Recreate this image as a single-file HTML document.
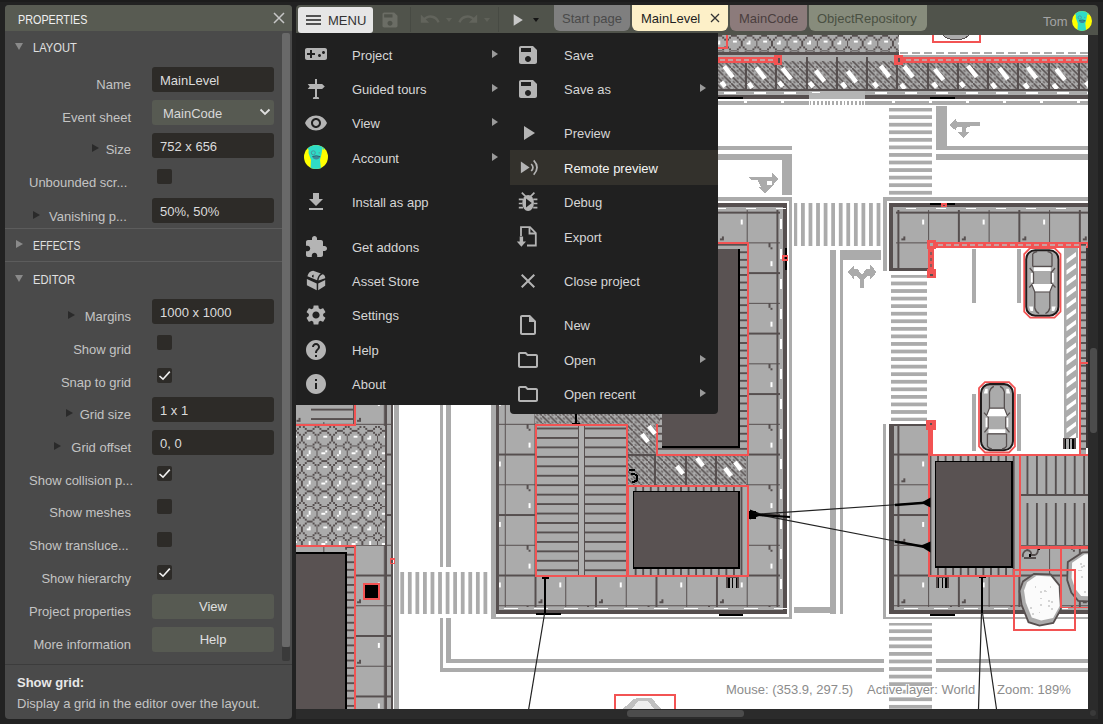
<!DOCTYPE html>
<html>
<head>
<meta charset="utf-8">
<title>Construct 3</title>
<style>
*{box-sizing:border-box;margin:0;padding:0}
html,body{width:1103px;height:724px;overflow:hidden;background:#222;font-family:"Liberation Sans",sans-serif;font-size:13px;color:#d0d0d0}
body{position:relative}
.abs{position:absolute}
#topstrip{left:0;top:0;width:1103px;height:2px;background:#1c1c1c}
/* ---------- properties panel ---------- */
#panel{left:5px;top:5px;width:287px;height:714px;background:#4a4a4a;border-radius:4px 4px 4px 4px;overflow:hidden}
#phead{left:0;top:0;width:287px;height:26px;background:#585b52}
#phead .t{left:13px;top:7px;font-size:13px;color:#f0f0f0;transform:scaleX(.83);transform-origin:0 0}
.sec{left:28px;font-size:13px;color:#e0e0e0;transform:scaleX(.86);transform-origin:0 0}
.lbl{right:161px;font-size:13px;color:#c4c4c4;white-space:nowrap;text-align:right}
.inp{left:147px;width:122px;height:25px;background:#2d2b28;border-radius:3px;color:#dcdcdc;font-size:13px;padding:6px 0 0 8px;white-space:nowrap}
.sel{left:147px;width:122px;height:25px;background:#575a52;border-radius:3px;color:#d8d8d8;font-size:13px;padding:6px 0 0 11px}
.btn{left:147px;width:122px;height:25px;background:#575a52;border-radius:3px;color:#e0e0e0;font-size:13px;text-align:center;padding-top:5px}
.chk{left:152px;width:15px;height:15px;background:#2d2b28;border-radius:2px}
.hr{left:0;width:277px;height:1px;background:#5c5c5c}
.tri-r{width:0;height:0;border-left:7px solid #2a2a2a;border-top:4.5px solid transparent;border-bottom:4.5px solid transparent}
.tri-rl{width:0;height:0;border-left:7px solid #8a8a8a;border-top:4.5px solid transparent;border-bottom:4.5px solid transparent}
.tri-d{width:0;height:0;border-top:7px solid #8a8a8a;border-left:4.5px solid transparent;border-right:4.5px solid transparent}
#pscroll{left:277px;top:28px;width:8px;height:614px;background:#696969;border-radius:2px}
#pscroll2{left:277px;top:642px;width:8px;height:14px;background:#3a3a3a;border-radius:0 0 2px 2px}
/* ---------- toolbar ---------- */
#toolbar{left:296px;top:5px;width:802px;height:29.5px;background:#50534b;border-radius:4px 4px 0 0}
#menubtn{left:2px;top:2px;width:75px;height:26px;background:#e6e6e6;border-radius:3px}
#menubtn .t{left:30px;top:6px;color:#333;font-size:13px}
.tab{top:0;height:26px;border-radius:0 0 6px 6px;font-size:13px;padding-top:6px;white-space:nowrap}
.vsep{top:2px;width:1px;height:25px;background:#474a43}
/* ---------- menus ---------- */
#menu1{left:296px;top:33px;width:214px;height:371.5px;background:#202020}
#menu2{left:510px;top:33px;width:207.5px;height:381px;background:#202020;border-radius:0 0 4px 4px}
.mi{left:54px;font-size:13px;color:#d6d6d6;white-space:nowrap}
.marr{width:0;height:0;border-left:6px solid #9a9a9a;border-top:4px solid transparent;border-bottom:4px solid transparent}
/* ---------- canvas ---------- */
.stat{font-size:13px;color:#8c8c8c;white-space:nowrap;text-shadow:1px 1px 0 #fff,-1px -1px 0 #fff,1px -1px 0 #fff,-1px 1px 0 #fff,0 1px 0 #fff,1px 0 0 #fff}
#canvas{left:296px;top:33px;width:792px;height:676px;background:#fff;overflow:hidden}
#vscroll{left:1088px;top:33px;width:10px;height:686px;background:#2b2b2b}
#hscroll{left:296px;top:709px;width:792px;height:10px;background:#2b2b2b}
</style>
</head>
<body>
<div id="topstrip" class="abs"></div>

<!-- PANEL -->
<div id="panel" class="abs">
  <div id="phead" class="abs"><div class="t abs">PROPERTIES</div>
    <svg class="abs" style="left:268px;top:7px" width="12" height="12" viewBox="0 0 12 12"><path d="M1 1L11 11M11 1L1 11" stroke="#c6c6c6" stroke-width="1.5" fill="none"/></svg>
  </div>
  <div id="pbody"><div class="abs tri-d" style="left:10px;top:38px"></div><div class="abs sec" style="top:35px">LAYOUT</div>
<div class="abs lbl" style="top:72px">Name</div>
<div class="abs inp" style="top:62px">MainLevel</div>
<div class="abs lbl" style="top:105px">Event sheet</div>
<div class="abs sel" style="top:95px">MainCode<svg class="abs" style="left:107px;top:8px" width="12" height="8" viewBox="0 0 12 8"><path d="M1.5 1.5L6 6L10.5 1.5" stroke="#e0e0e0" stroke-width="1.8" fill="none"/></svg></div>
<div class="abs lbl" style="top:137px">Size</div><div class="abs tri-r" style="left:87px;top:139px"></div>
<div class="abs inp" style="top:128px">752 x 656</div>
<div class="abs lbl" style="right:auto;left:24px;top:170px">Unbounded scr...</div>
<div class="abs chk" style="top:164px"></div>
<div class="abs lbl" style="right:auto;left:44px;top:204px">Vanishing p...</div><div class="abs tri-r" style="left:28px;top:206px"></div>
<div class="abs inp" style="top:193px">50%, 50%</div>
<div class="abs hr" style="top:223px"></div>
<div class="abs tri-rl" style="left:11px;top:235px"></div><div class="abs sec" style="transform:scaleX(.8);top:233px">EFFECTS</div>
<div class="abs hr" style="top:256px"></div>
<div class="abs tri-d" style="left:10px;top:270px"></div><div class="abs sec" style="top:267px">EDITOR</div>
<div class="abs lbl" style="top:304px">Margins</div><div class="abs tri-r" style="left:63px;top:306px"></div>
<div class="abs inp" style="top:294px">1000 x 1000</div>
<div class="abs lbl" style="top:337px">Show grid</div>
<div class="abs chk" style="top:330px"></div>
<div class="abs lbl" style="top:370px">Snap to grid</div>
<div class="abs chk" style="top:363px"><svg width="15" height="15" viewBox="0 0 15 15"><path d="M2.5 8L6 11.2L12.8 3.6" stroke="#f0f0f0" stroke-width="1.6" fill="none"/></svg></div>
<div class="abs lbl" style="top:402px">Grid size</div><div class="abs tri-r" style="left:61px;top:404px"></div>
<div class="abs inp" style="top:392px">1 x 1</div>
<div class="abs lbl" style="top:435px">Grid offset</div><div class="abs tri-r" style="left:49px;top:437px"></div>
<div class="abs inp" style="top:425px">0, 0</div>
<div class="abs lbl" style="right:auto;left:24px;top:468px">Show collision p...</div>
<div class="abs chk" style="top:461px"><svg width="15" height="15" viewBox="0 0 15 15"><path d="M2.5 8L6 11.2L12.8 3.6" stroke="#f0f0f0" stroke-width="1.6" fill="none"/></svg></div>
<div class="abs lbl" style="top:500px">Show meshes</div>
<div class="abs chk" style="top:494px"></div>
<div class="abs lbl" style="right:auto;left:24px;top:533px">Show transluce...</div>
<div class="abs chk" style="top:527px"></div>
<div class="abs lbl" style="top:566px">Show hierarchy</div>
<div class="abs chk" style="top:560px"><svg width="15" height="15" viewBox="0 0 15 15"><path d="M2.5 8L6 11.2L12.8 3.6" stroke="#f0f0f0" stroke-width="1.6" fill="none"/></svg></div>
<div class="abs lbl" style="top:599px">Project properties</div>
<div class="abs btn" style="top:589px">View</div>
<div class="abs lbl" style="top:632px">More information</div>
<div class="abs btn" style="top:622px">Help</div>
<div class="abs" style="left:0;top:659px;width:287px;height:1px;background:#3c3c3c"></div>
<div class="abs" style="left:12px;top:670px;font-weight:bold;color:#e8e8e8;font-size:13px">Show grid:</div>
<div class="abs" style="left:12px;top:691px;color:#c4c4c4;font-size:13px;white-space:nowrap">Display a grid in the editor over the layout.</div></div>
  <div id="pscroll" class="abs"></div><div id="pscroll2" class="abs"></div>
</div>

<!-- CANVAS -->
<div id="canvas" class="abs"><svg class="abs" style="left:0;top:0" width="792" height="676" viewBox="0 0 792 676" shape-rendering="crispEdges"><defs>
<pattern id="tile" width="32" height="32" patternUnits="userSpaceOnUse" patternTransform="translate(-3.4,-2.8) scale(1.89)">
 <rect width="32" height="32" fill="#ababab"/>
 <rect x="0" y="0" width="1" height="32" fill="#564f4f"/><rect x="16" y="0" width="1" height="32" fill="#564f4f"/><rect x="0" y="0" width="32" height="1" fill="#564f4f"/><rect x="0" y="16" width="32" height="1" fill="#564f4f"/>
 <rect x="13" y="4" width="1" height="3" fill="#fff"/>
 <rect x="2" y="14" width="2" height="1" fill="#564f4f"/><rect x="3" y="13" width="1" height="1" fill="#564f4f"/>
 <rect x="28" y="17" width="1" height="2" fill="#564f4f"/><rect x="29" y="19" width="1" height="1" fill="#564f4f"/>
 <rect x="29" y="26" width="1" height="3" fill="#fff"/>
</pattern>
<pattern id="cobble" width="16" height="16" patternUnits="userSpaceOnUse" patternTransform="translate(-8.85,1.75) scale(1.89)">
 <rect width="16" height="16" fill="#ababab"/><rect x="3" y="0" width="1" height="1" fill="#564f4f"/><rect x="4" y="0" width="1" height="1" fill="#564f4f"/><rect x="5" y="0" width="1" height="1" fill="#564f4f"/><rect x="0" y="3" width="1" height="1" fill="#564f4f"/><rect x="0" y="4" width="1" height="1" fill="#564f4f"/><rect x="0" y="5" width="1" height="1" fill="#564f4f"/><rect x="2" y="1" width="1" height="1" fill="#564f4f"/><rect x="1" y="2" width="1" height="1" fill="#564f4f"/><rect x="6" y="1" width="1" height="1" fill="#564f4f"/><rect x="7" y="2" width="1" height="1" fill="#564f4f"/><rect x="1" y="6" width="1" height="1" fill="#564f4f"/><rect x="2" y="7" width="1" height="1" fill="#564f4f"/><rect x="7" y="6" width="1" height="1" fill="#564f4f"/><rect x="6" y="7" width="1" height="1" fill="#564f4f"/><rect x="3" y="8" width="1" height="1" fill="#564f4f"/><rect x="4" y="8" width="1" height="1" fill="#564f4f"/><rect x="5" y="8" width="1" height="1" fill="#564f4f"/><rect x="0" y="11" width="1" height="1" fill="#564f4f"/><rect x="0" y="12" width="1" height="1" fill="#564f4f"/><rect x="0" y="13" width="1" height="1" fill="#564f4f"/><rect x="2" y="9" width="1" height="1" fill="#564f4f"/><rect x="1" y="10" width="1" height="1" fill="#564f4f"/><rect x="6" y="9" width="1" height="1" fill="#564f4f"/><rect x="7" y="10" width="1" height="1" fill="#564f4f"/><rect x="1" y="14" width="1" height="1" fill="#564f4f"/><rect x="2" y="15" width="1" height="1" fill="#564f4f"/><rect x="7" y="14" width="1" height="1" fill="#564f4f"/><rect x="6" y="15" width="1" height="1" fill="#564f4f"/><rect x="11" y="0" width="1" height="1" fill="#564f4f"/><rect x="12" y="0" width="1" height="1" fill="#564f4f"/><rect x="13" y="0" width="1" height="1" fill="#564f4f"/><rect x="8" y="3" width="1" height="1" fill="#564f4f"/><rect x="8" y="4" width="1" height="1" fill="#564f4f"/><rect x="8" y="5" width="1" height="1" fill="#564f4f"/><rect x="10" y="1" width="1" height="1" fill="#564f4f"/><rect x="9" y="2" width="1" height="1" fill="#564f4f"/><rect x="14" y="1" width="1" height="1" fill="#564f4f"/><rect x="15" y="2" width="1" height="1" fill="#564f4f"/><rect x="9" y="6" width="1" height="1" fill="#564f4f"/><rect x="10" y="7" width="1" height="1" fill="#564f4f"/><rect x="15" y="6" width="1" height="1" fill="#564f4f"/><rect x="14" y="7" width="1" height="1" fill="#564f4f"/><rect x="11" y="8" width="1" height="1" fill="#564f4f"/><rect x="12" y="8" width="1" height="1" fill="#564f4f"/><rect x="13" y="8" width="1" height="1" fill="#564f4f"/><rect x="8" y="11" width="1" height="1" fill="#564f4f"/><rect x="8" y="12" width="1" height="1" fill="#564f4f"/><rect x="8" y="13" width="1" height="1" fill="#564f4f"/><rect x="10" y="9" width="1" height="1" fill="#564f4f"/><rect x="9" y="10" width="1" height="1" fill="#564f4f"/><rect x="14" y="9" width="1" height="1" fill="#564f4f"/><rect x="15" y="10" width="1" height="1" fill="#564f4f"/><rect x="9" y="14" width="1" height="1" fill="#564f4f"/><rect x="10" y="15" width="1" height="1" fill="#564f4f"/><rect x="15" y="14" width="1" height="1" fill="#564f4f"/><rect x="14" y="15" width="1" height="1" fill="#564f4f"/><rect x="3" y="4" width="2" height="1" fill="#fff"/><rect x="4" y="3" width="1" height="1" fill="#fff"/><rect x="12" y="3" width="2" height="1" fill="#fff"/><rect x="4" y="11" width="1" height="2" fill="#fff"/><rect x="3" y="13" width="1" height="1" fill="#fff"/><rect x="11" y="12" width="2" height="1" fill="#fff"/><rect x="13" y="11" width="1" height="1" fill="#fff"/>
</pattern>
<pattern id="cobble2" width="16" height="16" patternUnits="userSpaceOnUse" patternTransform="translate(4.9,3.76) scale(1.89)">
 <rect width="16" height="16" fill="#ababab"/><rect x="3" y="0" width="1" height="1" fill="#564f4f"/><rect x="4" y="0" width="1" height="1" fill="#564f4f"/><rect x="5" y="0" width="1" height="1" fill="#564f4f"/><rect x="0" y="3" width="1" height="1" fill="#564f4f"/><rect x="0" y="4" width="1" height="1" fill="#564f4f"/><rect x="0" y="5" width="1" height="1" fill="#564f4f"/><rect x="2" y="1" width="1" height="1" fill="#564f4f"/><rect x="1" y="2" width="1" height="1" fill="#564f4f"/><rect x="6" y="1" width="1" height="1" fill="#564f4f"/><rect x="7" y="2" width="1" height="1" fill="#564f4f"/><rect x="1" y="6" width="1" height="1" fill="#564f4f"/><rect x="2" y="7" width="1" height="1" fill="#564f4f"/><rect x="7" y="6" width="1" height="1" fill="#564f4f"/><rect x="6" y="7" width="1" height="1" fill="#564f4f"/><rect x="3" y="8" width="1" height="1" fill="#564f4f"/><rect x="4" y="8" width="1" height="1" fill="#564f4f"/><rect x="5" y="8" width="1" height="1" fill="#564f4f"/><rect x="0" y="11" width="1" height="1" fill="#564f4f"/><rect x="0" y="12" width="1" height="1" fill="#564f4f"/><rect x="0" y="13" width="1" height="1" fill="#564f4f"/><rect x="2" y="9" width="1" height="1" fill="#564f4f"/><rect x="1" y="10" width="1" height="1" fill="#564f4f"/><rect x="6" y="9" width="1" height="1" fill="#564f4f"/><rect x="7" y="10" width="1" height="1" fill="#564f4f"/><rect x="1" y="14" width="1" height="1" fill="#564f4f"/><rect x="2" y="15" width="1" height="1" fill="#564f4f"/><rect x="7" y="14" width="1" height="1" fill="#564f4f"/><rect x="6" y="15" width="1" height="1" fill="#564f4f"/><rect x="11" y="0" width="1" height="1" fill="#564f4f"/><rect x="12" y="0" width="1" height="1" fill="#564f4f"/><rect x="13" y="0" width="1" height="1" fill="#564f4f"/><rect x="8" y="3" width="1" height="1" fill="#564f4f"/><rect x="8" y="4" width="1" height="1" fill="#564f4f"/><rect x="8" y="5" width="1" height="1" fill="#564f4f"/><rect x="10" y="1" width="1" height="1" fill="#564f4f"/><rect x="9" y="2" width="1" height="1" fill="#564f4f"/><rect x="14" y="1" width="1" height="1" fill="#564f4f"/><rect x="15" y="2" width="1" height="1" fill="#564f4f"/><rect x="9" y="6" width="1" height="1" fill="#564f4f"/><rect x="10" y="7" width="1" height="1" fill="#564f4f"/><rect x="15" y="6" width="1" height="1" fill="#564f4f"/><rect x="14" y="7" width="1" height="1" fill="#564f4f"/><rect x="11" y="8" width="1" height="1" fill="#564f4f"/><rect x="12" y="8" width="1" height="1" fill="#564f4f"/><rect x="13" y="8" width="1" height="1" fill="#564f4f"/><rect x="8" y="11" width="1" height="1" fill="#564f4f"/><rect x="8" y="12" width="1" height="1" fill="#564f4f"/><rect x="8" y="13" width="1" height="1" fill="#564f4f"/><rect x="10" y="9" width="1" height="1" fill="#564f4f"/><rect x="9" y="10" width="1" height="1" fill="#564f4f"/><rect x="14" y="9" width="1" height="1" fill="#564f4f"/><rect x="15" y="10" width="1" height="1" fill="#564f4f"/><rect x="9" y="14" width="1" height="1" fill="#564f4f"/><rect x="10" y="15" width="1" height="1" fill="#564f4f"/><rect x="15" y="14" width="1" height="1" fill="#564f4f"/><rect x="14" y="15" width="1" height="1" fill="#564f4f"/><rect x="3" y="4" width="2" height="1" fill="#fff"/><rect x="4" y="3" width="1" height="1" fill="#fff"/><rect x="12" y="3" width="2" height="1" fill="#fff"/><rect x="4" y="11" width="1" height="2" fill="#fff"/><rect x="3" y="13" width="1" height="1" fill="#fff"/><rect x="11" y="12" width="2" height="1" fill="#fff"/><rect x="13" y="11" width="1" height="1" fill="#fff"/>
</pattern>
<pattern id="glass" width="4" height="4" patternUnits="userSpaceOnUse" patternTransform="translate(-3.4,-2.8) scale(1.89)">
 <rect width="4" height="4" fill="#acacac"/>
 <path d="M-1 -1L5 5" stroke="#564f4f" stroke-width=".800" shape-rendering="auto"/>
 <path d="M1 -1L5 3M-1 1L3 5" stroke="#6d6767" stroke-width=".800" stroke-dasharray="1.414 1.414" shape-rendering="auto"/>
</pattern>
<pattern id="hstr" width="4" height="4" patternUnits="userSpaceOnUse" patternTransform="translate(-3.4,-2.8) scale(1.89)">
 <rect width="4" height="4" fill="#fff"/><rect x="0" y="1" width="4" height="2" fill="#ababab"/>
</pattern>
<pattern id="vstr" width="4" height="4" patternUnits="userSpaceOnUse" patternTransform="translate(-3.4,-2.8) scale(1.89)">
 <rect width="4" height="4" fill="#fff"/><rect x="1" y="0" width="2" height="4" fill="#ababab"/>
</pattern>
<pattern id="plankh" width="5" height="5" patternUnits="userSpaceOnUse" patternTransform="translate(239,394.55) scale(1.89)">
 <rect width="5" height="5" fill="#ababab"/><rect x="0" y="0" width="5" height="1" fill="#564f4f"/>
</pattern>
<pattern id="plankv" width="5" height="5" patternUnits="userSpaceOnUse" patternTransform="translate(730.5,0) scale(1.89)">
 <rect width="5" height="5" fill="#ababab"/><rect x="0" y="0" width="1" height="5" fill="#564f4f"/>
</pattern>
<pattern id="diag" width="4" height="4" patternUnits="userSpaceOnUse" patternTransform="translate(-3.4,-2.8) scale(1.89)">
 <rect width="4" height="4" fill="#fff"/>
 <path d="M-1 3L3 -1M1 5L5 1M-1 7 L7 -1" stroke="#ababab" stroke-width="1.250"/>
</pattern>
<pattern id="ticksv" width="4" height="4" patternUnits="userSpaceOnUse" patternTransform="translate(-3.4,-2.8) scale(1.89)">
 <rect width="4" height="4" fill="#ababab"/><rect x="0" y="1" width="4" height="1" fill="#564f4f"/>
</pattern>
<pattern id="ticksh" width="4" height="4" patternUnits="userSpaceOnUse" patternTransform="translate(-3.4,-2.8) scale(1.89)">
 <rect width="4" height="4" fill="#ababab"/><rect x="1" y="0" width="1" height="4" fill="#564f4f"/>
</pattern>
</defs>
<rect x="0" y="0" width="602.5" height="19.4" fill="url(#cobble)"/>
<rect x="0" y="19.4" width="602.5" height="2.3" fill="#564f4f"/>
<rect x="604" y="19.4" width="8" height="2" fill="#ababab"/>
<rect x="616" y="19.4" width="8" height="2" fill="#ababab"/>
<rect x="628" y="19.4" width="8" height="2" fill="#ababab"/>
<rect x="640" y="19.4" width="8" height="2" fill="#ababab"/>
<rect x="652" y="19.4" width="8" height="2" fill="#ababab"/>
<rect x="664" y="19.4" width="8" height="2" fill="#ababab"/>
<rect x="676" y="19.4" width="8" height="2" fill="#ababab"/>
<rect x="688" y="19.4" width="8" height="2" fill="#ababab"/>
<rect x="700" y="19.4" width="8" height="2" fill="#ababab"/>
<rect x="712" y="19.4" width="8" height="2" fill="#ababab"/>
<rect x="724" y="19.4" width="8" height="2" fill="#ababab"/>
<rect x="736" y="19.4" width="8" height="2" fill="#ababab"/>
<rect x="748" y="19.4" width="8" height="2" fill="#ababab"/>
<rect x="760" y="19.4" width="8" height="2" fill="#ababab"/>
<rect x="772" y="19.4" width="8" height="2" fill="#ababab"/>
<rect x="784" y="19.4" width="8" height="2" fill="#ababab"/>
<rect x="0" y="21.7" width="792" height="5.9" fill="#ababab"/>
<rect x="0" y="27.6" width="792" height="29.9" fill="url(#glass)"/>
<rect x="-4.4" y="23.5" width="2" height="38.5" fill="#564f4f"/>
<rect x="25.84" y="23.5" width="2" height="38.5" fill="#564f4f"/>
<rect x="56.08" y="23.5" width="2" height="38.5" fill="#564f4f"/>
<rect x="86.32" y="23.5" width="2" height="38.5" fill="#564f4f"/>
<rect x="116.56" y="23.5" width="2" height="38.5" fill="#564f4f"/>
<rect x="146.8" y="23.5" width="2" height="38.5" fill="#564f4f"/>
<rect x="177.04" y="23.5" width="2" height="38.5" fill="#564f4f"/>
<rect x="207.28" y="23.5" width="2" height="38.5" fill="#564f4f"/>
<rect x="237.52" y="23.5" width="2" height="38.5" fill="#564f4f"/>
<rect x="267.76" y="23.5" width="2" height="38.5" fill="#564f4f"/>
<rect x="298" y="23.5" width="2" height="38.5" fill="#564f4f"/>
<rect x="328.24" y="23.5" width="2" height="38.5" fill="#564f4f"/>
<rect x="358.48" y="23.5" width="2" height="38.5" fill="#564f4f"/>
<rect x="388.72" y="23.5" width="2" height="38.5" fill="#564f4f"/>
<rect x="418.96" y="23.5" width="2" height="38.5" fill="#564f4f"/>
<rect x="449.2" y="23.5" width="2" height="38.5" fill="#564f4f"/>
<rect x="479.44" y="23.5" width="2" height="38.5" fill="#564f4f"/>
<rect x="509.68" y="23.5" width="2" height="38.5" fill="#564f4f"/>
<rect x="539.92" y="23.5" width="2" height="38.5" fill="#564f4f"/>
<rect x="570.16" y="23.5" width="2" height="38.5" fill="#564f4f"/>
<rect x="600.4" y="23.5" width="2" height="38.5" fill="#564f4f"/>
<rect x="630.64" y="23.5" width="2" height="38.5" fill="#564f4f"/>
<rect x="660.88" y="23.5" width="2" height="38.5" fill="#564f4f"/>
<rect x="691.12" y="23.5" width="2" height="38.5" fill="#564f4f"/>
<rect x="721.36" y="23.5" width="2" height="38.5" fill="#564f4f"/>
<rect x="751.6" y="23.5" width="2" height="38.5" fill="#564f4f"/>
<rect x="781.84" y="23.5" width="2" height="38.5" fill="#564f4f"/>
<rect x="812.08" y="23.5" width="2" height="38.5" fill="#564f4f"/>
<line x1="428.21" y1="33.45" x2="436.89" y2="44.37" stroke="#fff" stroke-width="4.5" shape-rendering="auto"/>
<line x1="425.35" y1="48.88" x2="429.07" y2="53.56" stroke="#fff" stroke-width="4.5" shape-rendering="auto"/>
<line x1="460.15" y1="34.73" x2="468.83" y2="45.65" stroke="#fff" stroke-width="4.5" shape-rendering="auto"/>
<line x1="452.63" y1="50.18" x2="456.35" y2="54.86" stroke="#fff" stroke-width="4.5" shape-rendering="auto"/>
<line x1="486.4" y1="35.14" x2="495.08" y2="46.06" stroke="#fff" stroke-width="4.5" shape-rendering="auto"/>
<line x1="482.93" y1="48.93" x2="486.65" y2="53.61" stroke="#fff" stroke-width="4.5" shape-rendering="auto"/>
<line x1="519.74" y1="37.5" x2="528.42" y2="48.42" stroke="#fff" stroke-width="4.5" shape-rendering="auto"/>
<line x1="513.44" y1="49.33" x2="517.16" y2="54.01" stroke="#fff" stroke-width="4.5" shape-rendering="auto"/>
<line x1="551.6" y1="38.23" x2="560.28" y2="49.15" stroke="#fff" stroke-width="4.5" shape-rendering="auto"/>
<line x1="545.95" y1="49.85" x2="549.67" y2="54.53" stroke="#fff" stroke-width="4.5" shape-rendering="auto"/>
<line x1="584.63" y1="32.82" x2="593.31" y2="43.74" stroke="#fff" stroke-width="4.5" shape-rendering="auto"/>
<line x1="577.59" y1="49.53" x2="581.31" y2="54.21" stroke="#fff" stroke-width="4.5" shape-rendering="auto"/>
<line x1="608.21" y1="33.25" x2="616.89" y2="44.17" stroke="#fff" stroke-width="4.5" shape-rendering="auto"/>
<line x1="605.08" y1="51.11" x2="608.8" y2="55.79" stroke="#fff" stroke-width="4.5" shape-rendering="auto"/>
<line x1="638.75" y1="36.03" x2="647.43" y2="46.95" stroke="#fff" stroke-width="4.5" shape-rendering="auto"/>
<line x1="636.97" y1="49.78" x2="640.69" y2="54.46" stroke="#fff" stroke-width="4.5" shape-rendering="auto"/>
<line x1="671.92" y1="32.92" x2="680.6" y2="43.84" stroke="#fff" stroke-width="4.5" shape-rendering="auto"/>
<line x1="664.32" y1="49.28" x2="668.04" y2="53.96" stroke="#fff" stroke-width="4.5" shape-rendering="auto"/>
<line x1="703.22" y1="35.11" x2="711.9" y2="46.03" stroke="#fff" stroke-width="4.5" shape-rendering="auto"/>
<line x1="695.83" y1="50.42" x2="699.55" y2="55.1" stroke="#fff" stroke-width="4.5" shape-rendering="auto"/>
<line x1="731.65" y1="34.34" x2="740.33" y2="45.26" stroke="#fff" stroke-width="4.5" shape-rendering="auto"/>
<line x1="728.47" y1="50.76" x2="732.19" y2="55.44" stroke="#fff" stroke-width="4.5" shape-rendering="auto"/>
<line x1="760.21" y1="35.99" x2="768.89" y2="46.91" stroke="#fff" stroke-width="4.5" shape-rendering="auto"/>
<line x1="757.37" y1="51.29" x2="761.09" y2="55.97" stroke="#fff" stroke-width="4.5" shape-rendering="auto"/>
<line x1="794.34" y1="34.27" x2="803.02" y2="45.19" stroke="#fff" stroke-width="4.5" shape-rendering="auto"/>
<line x1="789.88" y1="49.01" x2="793.6" y2="53.69" stroke="#fff" stroke-width="4.5" shape-rendering="auto"/>
<rect x="0" y="55.7" width="792" height="1.8" fill="#564f4f"/>
<rect x="0" y="57.5" width="792" height="4.3" fill="#ababab"/>
<rect x="427.96" y="59" width="12" height="1.5" fill="#fff"/>
<rect x="458.2" y="59" width="12" height="1.5" fill="#fff"/>
<rect x="488.44" y="59" width="12" height="1.5" fill="#fff"/>
<rect x="518.68" y="59" width="12" height="1.5" fill="#fff"/>
<rect x="548.92" y="59" width="12" height="1.5" fill="#fff"/>
<rect x="579.16" y="59" width="12" height="1.5" fill="#fff"/>
<rect x="609.4" y="59" width="12" height="1.5" fill="#fff"/>
<rect x="639.64" y="59" width="12" height="1.5" fill="#fff"/>
<rect x="669.88" y="59" width="12" height="1.5" fill="#fff"/>
<rect x="700.12" y="59" width="12" height="1.5" fill="#fff"/>
<rect x="730.36" y="59" width="12" height="1.5" fill="#fff"/>
<rect x="760.6" y="59" width="12" height="1.5" fill="#fff"/>
<rect x="790.84" y="59" width="12" height="1.5" fill="#fff"/>
<rect x="0" y="61.8" width="792" height="4" fill="#564f4f"/>
<rect x="512.5" y="57.5" width="56.5" height="8.3" fill="#b4b4b4"/>
<rect x="516" y="58.5" width="8" height="1.5" fill="#fff"/>
<rect x="422" y="64" width="25" height="2" fill="#000"/>
<rect x="634" y="64" width="25" height="2" fill="#000"/>
<rect x="0" y="67.8" width="792" height="4" fill="#ababab"/>
<rect x="4" y="67.8" width="3" height="1.7" fill="#fff"/>
<rect x="41" y="67.8" width="3" height="1.7" fill="#fff"/>
<rect x="78" y="67.8" width="3" height="1.7" fill="#fff"/>
<rect x="115" y="67.8" width="3" height="1.7" fill="#fff"/>
<rect x="152" y="67.8" width="3" height="1.7" fill="#fff"/>
<rect x="189" y="67.8" width="3" height="1.7" fill="#fff"/>
<rect x="226" y="67.8" width="3" height="1.7" fill="#fff"/>
<rect x="263" y="67.8" width="3" height="1.7" fill="#fff"/>
<rect x="300" y="67.8" width="3" height="1.7" fill="#fff"/>
<rect x="337" y="67.8" width="3" height="1.7" fill="#fff"/>
<rect x="374" y="67.8" width="3" height="1.7" fill="#fff"/>
<rect x="411" y="67.8" width="3" height="1.7" fill="#fff"/>
<rect x="448" y="67.8" width="3" height="1.7" fill="#fff"/>
<rect x="485" y="67.8" width="3" height="1.7" fill="#fff"/>
<rect x="522" y="67.8" width="3" height="1.7" fill="#fff"/>
<rect x="559" y="67.8" width="3" height="1.7" fill="#fff"/>
<rect x="596" y="67.8" width="3" height="1.7" fill="#fff"/>
<rect x="633" y="67.8" width="3" height="1.7" fill="#fff"/>
<rect x="670" y="67.8" width="3" height="1.7" fill="#fff"/>
<rect x="707" y="67.8" width="3" height="1.7" fill="#fff"/>
<rect x="744" y="67.8" width="3" height="1.7" fill="#fff"/>
<rect x="781" y="67.8" width="3" height="1.7" fill="#fff"/>
<rect x="512.5" y="67.5" width="56.5" height="4.5" fill="#fff"/>
<rect x="513.5" y="67.8" width="1.9" height="4" fill="#ababab"/>
<rect x="517.28" y="67.8" width="1.9" height="4" fill="#ababab"/>
<rect x="521.06" y="67.8" width="1.9" height="4" fill="#ababab"/>
<rect x="524.84" y="67.8" width="1.9" height="4" fill="#ababab"/>
<rect x="528.62" y="67.8" width="1.9" height="4" fill="#ababab"/>
<rect x="532.4" y="67.8" width="1.9" height="4" fill="#ababab"/>
<rect x="536.18" y="67.8" width="1.9" height="4" fill="#ababab"/>
<rect x="539.96" y="67.8" width="1.9" height="4" fill="#ababab"/>
<rect x="543.74" y="67.8" width="1.9" height="4" fill="#ababab"/>
<rect x="547.52" y="67.8" width="1.9" height="4" fill="#ababab"/>
<rect x="551.3" y="67.8" width="1.9" height="4" fill="#ababab"/>
<rect x="555.08" y="67.8" width="1.9" height="4" fill="#ababab"/>
<rect x="558.86" y="67.8" width="1.9" height="4" fill="#ababab"/>
<rect x="562.64" y="67.8" width="1.9" height="4" fill="#ababab"/>
<rect x="566.42" y="67.8" width="1.9" height="4" fill="#ababab"/>
<rect x="412" y="23.7" width="68" height="6.2" fill="#f25353"/>
<rect x="477.5" y="22" width="8.5" height="9.5" fill="#f25353"/>
<rect x="482" y="24.5" width="2" height="5" fill="#564f4f"/>
<rect x="602" y="23.7" width="190" height="6.2" fill="#f25353"/>
<rect x="598" y="22" width="9" height="9.5" fill="#f25353"/>
<rect x="601.5" y="25" width="2" height="4" fill="#564f4f"/>
<rect x="424" y="25.6" width="5" height="2.3" fill="#c9a0a0"/>
<rect x="432" y="25.6" width="5" height="2.3" fill="#c9a0a0"/>
<rect x="440" y="25.6" width="5" height="2.3" fill="#c9a0a0"/>
<rect x="448" y="25.6" width="5" height="2.3" fill="#c9a0a0"/>
<rect x="456" y="25.6" width="5" height="2.3" fill="#c9a0a0"/>
<rect x="464" y="25.6" width="5" height="2.3" fill="#c9a0a0"/>
<rect x="472" y="25.6" width="5" height="2.3" fill="#c9a0a0"/>
<rect x="610" y="25.6" width="5" height="2.3" fill="#c9a0a0"/>
<rect x="618" y="25.6" width="5" height="2.3" fill="#c9a0a0"/>
<rect x="626" y="25.6" width="5" height="2.3" fill="#c9a0a0"/>
<rect x="634" y="25.6" width="5" height="2.3" fill="#c9a0a0"/>
<rect x="642" y="25.6" width="5" height="2.3" fill="#c9a0a0"/>
<rect x="650" y="25.6" width="5" height="2.3" fill="#c9a0a0"/>
<rect x="658" y="25.6" width="5" height="2.3" fill="#c9a0a0"/>
<rect x="666" y="25.6" width="5" height="2.3" fill="#c9a0a0"/>
<rect x="674" y="25.6" width="5" height="2.3" fill="#c9a0a0"/>
<rect x="682" y="25.6" width="5" height="2.3" fill="#c9a0a0"/>
<rect x="690" y="25.6" width="5" height="2.3" fill="#c9a0a0"/>
<rect x="698" y="25.6" width="5" height="2.3" fill="#c9a0a0"/>
<rect x="706" y="25.6" width="5" height="2.3" fill="#c9a0a0"/>
<rect x="714" y="25.6" width="5" height="2.3" fill="#c9a0a0"/>
<rect x="722" y="25.6" width="5" height="2.3" fill="#c9a0a0"/>
<rect x="730" y="25.6" width="5" height="2.3" fill="#c9a0a0"/>
<rect x="738" y="25.6" width="5" height="2.3" fill="#c9a0a0"/>
<rect x="746" y="25.6" width="5" height="2.3" fill="#c9a0a0"/>
<rect x="754" y="25.6" width="5" height="2.3" fill="#c9a0a0"/>
<rect x="762" y="25.6" width="5" height="2.3" fill="#c9a0a0"/>
<rect x="770" y="25.6" width="5" height="2.3" fill="#c9a0a0"/>
<rect x="778" y="25.6" width="5" height="2.3" fill="#c9a0a0"/>
<rect x="786" y="25.6" width="5" height="2.3" fill="#c9a0a0"/>
<rect x="429.5" y="0" width="2" height="16" fill="#f25353"/>
<rect x="422" y="14" width="9.5" height="2" fill="#f25353"/>
<rect x="637" y="-7" width="46.5" height="16" fill="none" stroke="#f25353" stroke-width="2"/>
<ellipse cx="660" cy="0" rx="13" ry="7" fill="#ababab" stroke="#564f4f" stroke-width="1"/>
<rect x="0" y="112.5" width="496" height="4.5" fill="#ababab"/>
<rect x="0" y="121" width="496" height="6" fill="#ababab"/>
<rect x="485.5" y="121" width="10.5" height="40.5" fill="#ababab"/>
<polygon points="453.1,144.4 476,144.4 476.3,140.3 482.7,146 476.5,152.6 468.9,160.4 462.3,154 465,154 462,147.5 455,146.5" fill="#ababab"/>
<rect x="471" y="147.5" width="4.5" height="4.5" fill="#fff"/>
<rect x="0" y="164" width="494" height="3.5" fill="#ababab"/>
<rect x="593" y="74.5" width="42.5" height="87.5" fill="url(#hstr)"/>
<rect x="640" y="73" width="10.5" height="43.5" fill="#ababab"/>
<rect x="640" y="112.5" width="152" height="4" fill="#ababab"/>
<rect x="640" y="121" width="152" height="5.5" fill="#ababab"/>
<polygon points="653.1,92 660,85.4 660.8,89.2 684,89.2 684,92.8 676,92.8 670,95 670,98.6 673.8,98.6 667.4,105.5 661.3,98.6 665.5,98.6 665.5,94.5 660.8,94 660,97.5" fill="#ababab"/>
<rect x="587" y="164" width="205" height="3.5" fill="#ababab"/>
<rect x="587" y="164" width="3.5" height="74" fill="#ababab"/>
<rect x="497.5" y="170" width="87.5" height="43" fill="url(#vstr)"/>
<rect x="200" y="170" width="291" height="411.3" fill="url(#tile)"/>
<rect x="200" y="170" width="291" height="4" fill="#564f4f"/>
<rect x="487" y="170" width="4" height="411.3" fill="#564f4f"/>
<rect x="200" y="577" width="291" height="4.3" fill="#564f4f"/>
<rect x="200.2" y="170" width="2.8" height="411.3" fill="#564f4f"/>
<rect x="203" y="174" width="284" height="3" fill="#ababab"/>
<rect x="483.5" y="174" width="3.5" height="403" fill="#ababab"/>
<rect x="203" y="574" width="284" height="3" fill="#ababab"/>
<rect x="210" y="174.5" width="10" height="1.5" fill="#fff"/>
<rect x="208" y="574.5" width="14" height="1.5" fill="#fff"/>
<rect x="240" y="174.5" width="10" height="1.5" fill="#fff"/>
<rect x="238" y="574.5" width="14" height="1.5" fill="#fff"/>
<rect x="270" y="174.5" width="10" height="1.5" fill="#fff"/>
<rect x="268" y="574.5" width="14" height="1.5" fill="#fff"/>
<rect x="300" y="174.5" width="10" height="1.5" fill="#fff"/>
<rect x="298" y="574.5" width="14" height="1.5" fill="#fff"/>
<rect x="330" y="174.5" width="10" height="1.5" fill="#fff"/>
<rect x="328" y="574.5" width="14" height="1.5" fill="#fff"/>
<rect x="360" y="174.5" width="10" height="1.5" fill="#fff"/>
<rect x="358" y="574.5" width="14" height="1.5" fill="#fff"/>
<rect x="390" y="174.5" width="10" height="1.5" fill="#fff"/>
<rect x="388" y="574.5" width="14" height="1.5" fill="#fff"/>
<rect x="420" y="174.5" width="10" height="1.5" fill="#fff"/>
<rect x="418" y="574.5" width="14" height="1.5" fill="#fff"/>
<rect x="450" y="174.5" width="10" height="1.5" fill="#fff"/>
<rect x="448" y="574.5" width="14" height="1.5" fill="#fff"/>
<rect x="480" y="174.5" width="10" height="1.5" fill="#fff"/>
<rect x="478" y="574.5" width="14" height="1.5" fill="#fff"/>
<rect x="484.3" y="186" width="1.7" height="10" fill="#fff"/>
<rect x="484.3" y="216" width="1.7" height="10" fill="#fff"/>
<rect x="484.3" y="246" width="1.7" height="10" fill="#fff"/>
<rect x="484.3" y="276" width="1.7" height="10" fill="#fff"/>
<rect x="484.3" y="306" width="1.7" height="10" fill="#fff"/>
<rect x="484.3" y="336" width="1.7" height="10" fill="#fff"/>
<rect x="484.3" y="366" width="1.7" height="10" fill="#fff"/>
<rect x="484.3" y="396" width="1.7" height="10" fill="#fff"/>
<rect x="484.3" y="426" width="1.7" height="10" fill="#fff"/>
<rect x="484.3" y="456" width="1.7" height="10" fill="#fff"/>
<rect x="484.3" y="486" width="1.7" height="10" fill="#fff"/>
<rect x="484.3" y="516" width="1.7" height="10" fill="#fff"/>
<rect x="484.3" y="546" width="1.7" height="10" fill="#fff"/>
<rect x="492.5" y="164" width="3.5" height="422.3" fill="#ababab"/>
<rect x="195.3" y="372" width="4.2" height="214.3" fill="#ababab"/>
<rect x="195.3" y="583.7" width="300.7" height="2.6" fill="#ababab"/>
<rect x="361" y="210" width="90.5" height="211.5" fill="none" stroke="#f25353" stroke-width="2"/>
<rect x="362" y="211" width="88.5" height="209.5" fill="url(#ticksv)"/>
<rect x="366" y="215.7" width="78" height="199.3" fill="#000"/>
<rect x="366" y="215.7" width="76.2" height="197.5" fill="#595252"/>
<rect x="239" y="381" width="125" height="9.5" fill="url(#glass)"/>
<rect x="331" y="391" width="29" height="31" fill="url(#glass)"/>
<rect x="331" y="422.5" width="119" height="29" fill="url(#glass)"/>
<rect x="358.48" y="422.5" width="2" height="29" fill="#564f4f"/>
<rect x="388.72" y="422.5" width="2" height="29" fill="#564f4f"/>
<rect x="418.96" y="422.5" width="2" height="29" fill="#564f4f"/>
<rect x="331" y="420.5" width="29" height="2" fill="#564f4f"/>
<line x1="345.9" y1="401.1" x2="352.1" y2="408.9" stroke="#fff" stroke-width="4.5" shape-rendering="auto"/>
<line x1="380.9" y1="433.1" x2="387.1" y2="440.9" stroke="#fff" stroke-width="4.5" shape-rendering="auto"/>
<line x1="400.9" y1="425.1" x2="407.1" y2="432.9" stroke="#fff" stroke-width="4.5" shape-rendering="auto"/>
<line x1="428.9" y1="435.1" x2="435.1" y2="442.9" stroke="#fff" stroke-width="4.5" shape-rendering="auto"/>
<line x1="438.9" y1="429.1" x2="445.1" y2="436.9" stroke="#fff" stroke-width="4.5" shape-rendering="auto"/>
<line x1="352.9" y1="393.1" x2="359.1" y2="400.9" stroke="#fff" stroke-width="4.5" shape-rendering="auto"/>
<rect x="332" y="453" width="119.5" height="89.5" fill="none" stroke="#f25353" stroke-width="2"/>
<rect x="333" y="454" width="117.5" height="87.5" fill="url(#ticksh)"/>
<rect x="336.5" y="457.5" width="107.5" height="78.2" fill="#000"/>
<rect x="338.3" y="459.3" width="103.9" height="74.6" fill="#595252"/>
<rect x="239" y="390.7" width="92" height="151.8" fill="url(#plankh)"/>
<rect x="281.5" y="390.7" width="7.5" height="151.8" fill="#b0b0b0"/>
<rect x="281.5" y="390.7" width="1.5" height="151.8" fill="#564f4f"/>
<rect x="287.5" y="390.7" width="1.5" height="151.8" fill="#564f4f"/>
<rect x="240" y="391.7" width="91" height="150.8" fill="none" stroke="#f25353" stroke-width="2"/>
<path d="M333 437h6M335 441c8 -1 9 8 1 8" stroke="#000" stroke-width="2" fill="none"/>
<rect x="279.3" y="381" width="1.7" height="9" fill="#000"/>
<rect x="276" y="389.5" width="8" height="1.5" fill="#000"/>
<rect x="430.3" y="543.8" width="12.5" height="11.3" fill="#564f4f"/>
<rect x="432.1" y="545.3" width="1.6" height="9.8" fill="#000"/>
<rect x="435.8" y="545.3" width="1.6" height="9.8" fill="#000"/>
<rect x="439.5" y="545.3" width="1.6" height="9.8" fill="#000"/>
<rect x="433.7" y="545.3" width="2.1" height="9.8" fill="#ababab"/>
<rect x="437.4" y="545.3" width="2.1" height="9.8" fill="#ababab"/>
<rect x="422.7" y="581" width="23.8" height="1.6" fill="#000"/>
<rect x="488.5" y="214.5" width="2.2" height="22.5" fill="#000"/>
<rect x="486.75" y="222.75" width="4.5" height="4" fill="none" stroke="#f25353" stroke-width="1.5"/>
<rect x="0" y="372" width="95" height="304" fill="url(#tile)"/>
<rect x="95" y="372" width="2" height="304" fill="#564f4f"/>
<rect x="89" y="372" width="1.5" height="304" fill="#564f4f"/>
<rect x="97.7" y="372" width="4.8" height="304" fill="#ababab"/>
<rect x="15" y="372" width="41.5" height="17" fill="url(#plankh)"/>
<rect x="57.7" y="372" width="2" height="21" fill="#f25353"/>
<rect x="0" y="391" width="59.7" height="2" fill="#f25353"/>
<rect x="0" y="393" width="89" height="118.5" fill="url(#cobble2)"/>
<rect x="0" y="511.5" width="60" height="2" fill="#f25353"/>
<rect x="57.7" y="511.5" width="2.3" height="164.5" fill="#f25353"/>
<rect x="51" y="513.5" width="6.7" height="162.5" fill="url(#ticksv)"/>
<rect x="0" y="518.7" width="51" height="157.3" fill="#000"/>
<rect x="0" y="520.5" width="49.3" height="155.5" fill="#595252"/>
<rect x="68" y="551" width="15" height="15" fill="none" stroke="#f25353" stroke-width="2"/>
<rect x="69" y="552" width="13" height="13" fill="#000"/>
<rect x="94.25" y="525.75" width="4" height="4.7" fill="none" stroke="#f25353" stroke-width="1.5"/>
<rect x="143.5" y="372" width="3.5" height="161.7" fill="#ababab"/>
<rect x="150.2" y="372" width="5" height="161.7" fill="#ababab"/>
<rect x="104" y="538.7" width="90" height="42.6" fill="url(#vstr)"/>
<rect x="143.5" y="585" width="3.5" height="53.7" fill="#ababab"/>
<rect x="143.5" y="635" width="444.5" height="3.7" fill="#ababab"/>
<rect x="640" y="635" width="152" height="3.7" fill="#ababab"/>
<rect x="150.2" y="585" width="5" height="45" fill="#ababab"/>
<rect x="150.2" y="626.2" width="437.8" height="3.8" fill="#ababab"/>
<rect x="640" y="626.2" width="152" height="3.8" fill="#ababab"/>
<rect x="533.7" y="217" width="5.8" height="364" fill="#ababab"/>
<rect x="543.7" y="217" width="3.3" height="364" fill="#ababab"/>
<rect x="544.3" y="217.1" width="40.7" height="9.6" fill="#ababab"/>
<rect x="498" y="573.7" width="41.5" height="6.3" fill="#ababab"/>
<polygon points="551.3,239 557.9,232.3 558.5,236 562,236.5 565.9,242 569.8,236.5 573.5,236 574.5,232.3 580.8,239 574.5,246 573.5,242.5 571,243 567.8,247 567.8,255 564,255 564,247 561,243 558.5,242.5 557.9,246" fill="#ababab"/>
<rect x="593" y="170" width="199" height="39.5" fill="url(#tile)"/>
<rect x="593" y="209" width="39.5" height="29" fill="url(#tile)"/>
<rect x="593" y="170" width="199" height="4" fill="#564f4f"/>
<rect x="593" y="170" width="4" height="68" fill="#564f4f"/>
<rect x="593" y="234.5" width="39" height="3.5" fill="#564f4f"/>
<rect x="597" y="174" width="195" height="3" fill="#ababab"/>
<rect x="597" y="174" width="3" height="60.5" fill="#ababab"/>
<rect x="610" y="174.5" width="10" height="1.5" fill="#fff"/>
<rect x="640" y="174.5" width="10" height="1.5" fill="#fff"/>
<rect x="670" y="174.5" width="10" height="1.5" fill="#fff"/>
<rect x="700" y="174.5" width="10" height="1.5" fill="#fff"/>
<rect x="730" y="174.5" width="10" height="1.5" fill="#fff"/>
<rect x="760" y="174.5" width="10" height="1.5" fill="#fff"/>
<rect x="633.7" y="170" width="25" height="2" fill="#000"/>
<rect x="645.75" y="170.75" width="4" height="2.5" fill="none" stroke="#f25353" stroke-width="1.5"/>
<rect x="635" y="208.7" width="157" height="6.6" fill="#f25353"/>
<rect x="642" y="210.8" width="4.5" height="2.4" fill="#c9a0a0"/>
<rect x="650" y="210.8" width="4.5" height="2.4" fill="#c9a0a0"/>
<rect x="658" y="210.8" width="4.5" height="2.4" fill="#c9a0a0"/>
<rect x="666" y="210.8" width="4.5" height="2.4" fill="#c9a0a0"/>
<rect x="674" y="210.8" width="4.5" height="2.4" fill="#c9a0a0"/>
<rect x="682" y="210.8" width="4.5" height="2.4" fill="#c9a0a0"/>
<rect x="690" y="210.8" width="4.5" height="2.4" fill="#c9a0a0"/>
<rect x="698" y="210.8" width="4.5" height="2.4" fill="#c9a0a0"/>
<rect x="706" y="210.8" width="4.5" height="2.4" fill="#c9a0a0"/>
<rect x="714" y="210.8" width="4.5" height="2.4" fill="#c9a0a0"/>
<rect x="722" y="210.8" width="4.5" height="2.4" fill="#c9a0a0"/>
<rect x="730" y="210.8" width="4.5" height="2.4" fill="#c9a0a0"/>
<rect x="738" y="210.8" width="4.5" height="2.4" fill="#c9a0a0"/>
<rect x="746" y="210.8" width="4.5" height="2.4" fill="#c9a0a0"/>
<rect x="754" y="210.8" width="4.5" height="2.4" fill="#c9a0a0"/>
<rect x="762" y="210.8" width="4.5" height="2.4" fill="#c9a0a0"/>
<rect x="770" y="210.8" width="4.5" height="2.4" fill="#c9a0a0"/>
<rect x="778" y="210.8" width="4.5" height="2.4" fill="#c9a0a0"/>
<rect x="786" y="210.8" width="4.5" height="2.4" fill="#c9a0a0"/>
<rect x="630.5" y="207" width="9" height="8.7" fill="#f25353"/>
<rect x="634" y="210" width="2.5" height="2.5" fill="#ababab"/>
<rect x="631.7" y="213" width="6" height="26" fill="#f25353"/>
<rect x="630.5" y="235.7" width="9" height="8.8" fill="#f25353"/>
<rect x="633.5" y="240.5" width="3.5" height="2" fill="#564f4f"/>
<rect x="633.8" y="219" width="1.9" height="2.5" fill="#8a5a5a"/>
<rect x="633.8" y="225" width="1.9" height="2.5" fill="#8a5a5a"/>
<rect x="633.8" y="231" width="1.9" height="2.5" fill="#8a5a5a"/>
<rect x="676.3" y="215.7" width="3.7" height="53.8" fill="#ababab"/>
<rect x="676.3" y="360.7" width="3.7" height="57.3" fill="#ababab"/>
<rect x="721.2" y="215.7" width="3.6" height="53.8" fill="#ababab"/>
<rect x="721.2" y="360.7" width="3.6" height="57.3" fill="#ababab"/>
<g transform="translate(728.2,215) scale(1,1)" shape-rendering="auto"><rect x="2" y="2.200" width="32.300" height="65.500" rx="9" ry="9" fill="#ababab" stroke="#1e1a1a" stroke-width="2"/><path d="M8.500 6V18.500M27.800 6V18.500M8.500 18.500H27.800M8.500 6Q10 3.800 13 3.500M27.800 6Q26.300 3.800 23.300 3.500" stroke="#564f4f" stroke-width="1.300" fill="none"/><rect x="9.600" y="19.300" width="17" height="3.700" fill="#fff"/><rect x="6.600" y="25" width="2.700" height="9.500" fill="#fff"/><rect x="26.900" y="25" width="2.700" height="9.500" fill="#fff"/><path d="M5.500 20L9.300 24.500V35L5 39.500M30.800 20L27 24.500V35L31.300 39.500" stroke="#564f4f" stroke-width="1.300" fill="none"/><path d="M7.800 36H28.400L25.600 43.800H10.600Z" fill="#fff"/><path d="M7.600 36.500L10.600 44H25.600L28.600 36.500" stroke="#564f4f" stroke-width="1.200" fill="none"/><path d="M10.600 44V60Q11.500 64 15 65.500M25.600 44V60Q24.700 64 21.200 65.500" stroke="#564f4f" stroke-width="1.300" fill="none"/><path d="M4.800 58.500h4v4.500h-2.500z" fill="#fff"/><path d="M31.500 58.500h-4v4.500h2.500z" fill="#fff"/><polygon points="6,0 30.300,0 36.300,6 36.300,63.700 30.300,69.700 6,69.700 0,63.700 0,6" fill="none" stroke="#f25353" stroke-width="1.800"/></g>
<g transform="translate(683,419.5) scale(0.99,-1.01)" shape-rendering="auto"><rect x="2" y="2.200" width="32.300" height="65.500" rx="9" ry="9" fill="#ababab" stroke="#1e1a1a" stroke-width="2"/><path d="M8.500 6V18.500M27.800 6V18.500M8.500 18.500H27.800M8.500 6Q10 3.800 13 3.500M27.800 6Q26.300 3.800 23.300 3.500" stroke="#564f4f" stroke-width="1.300" fill="none"/><rect x="9.600" y="19.300" width="17" height="3.700" fill="#fff"/><rect x="6.600" y="25" width="2.700" height="9.500" fill="#fff"/><rect x="26.900" y="25" width="2.700" height="9.500" fill="#fff"/><path d="M5.500 20L9.300 24.500V35L5 39.500M30.800 20L27 24.500V35L31.300 39.500" stroke="#564f4f" stroke-width="1.300" fill="none"/><path d="M7.800 36H28.400L25.600 43.800H10.600Z" fill="#fff"/><path d="M7.600 36.500L10.600 44H25.600L28.600 36.500" stroke="#564f4f" stroke-width="1.200" fill="none"/><path d="M10.600 44V60Q11.500 64 15 65.500M25.600 44V60Q24.700 64 21.200 65.500" stroke="#564f4f" stroke-width="1.300" fill="none"/><path d="M4.800 58.500h4v4.500h-2.500z" fill="#fff"/><path d="M31.500 58.500h-4v4.500h2.500z" fill="#fff"/><polygon points="6,0 30.300,0 36.300,6 36.300,63.700 30.300,69.700 6,69.700 0,63.700 0,6" fill="none" stroke="#f25353" stroke-width="1.800"/></g>
<rect x="767.7" y="215" width="14.7" height="189.5" fill="#ababab"/>
<polygon points="770.5,226 780,219 780,223.5 770.5,230.5" fill="#fff" shape-rendering="auto"/>
<polygon points="770.5,237.3 780,230.3 780,234.8 770.5,241.8" fill="#fff" shape-rendering="auto"/>
<polygon points="770.5,248.6 780,241.6 780,246.1 770.5,253.1" fill="#fff" shape-rendering="auto"/>
<polygon points="770.5,259.9 780,252.9 780,257.4 770.5,264.4" fill="#fff" shape-rendering="auto"/>
<polygon points="770.5,271.2 780,264.2 780,268.7 770.5,275.7" fill="#fff" shape-rendering="auto"/>
<polygon points="770.5,282.5 780,275.5 780,280 770.5,287" fill="#fff" shape-rendering="auto"/>
<polygon points="770.5,293.8 780,286.8 780,291.3 770.5,298.3" fill="#fff" shape-rendering="auto"/>
<polygon points="770.5,305.1 780,298.1 780,302.6 770.5,309.6" fill="#fff" shape-rendering="auto"/>
<polygon points="770.5,316.4 780,309.4 780,313.9 770.5,320.9" fill="#fff" shape-rendering="auto"/>
<polygon points="770.5,327.7 780,320.7 780,325.2 770.5,332.2" fill="#fff" shape-rendering="auto"/>
<polygon points="770.5,339 780,332 780,336.5 770.5,343.5" fill="#fff" shape-rendering="auto"/>
<polygon points="770.5,350.3 780,343.3 780,347.8 770.5,354.8" fill="#fff" shape-rendering="auto"/>
<polygon points="770.5,361.6 780,354.6 780,359.1 770.5,366.1" fill="#fff" shape-rendering="auto"/>
<polygon points="770.5,372.9 780,365.9 780,370.4 770.5,377.4" fill="#fff" shape-rendering="auto"/>
<polygon points="770.5,384.2 780,377.2 780,381.7 770.5,388.7" fill="#fff" shape-rendering="auto"/>
<polygon points="770.5,395.5 780,388.5 780,393 770.5,400" fill="#fff" shape-rendering="auto"/>
<polygon points="770.5,406.8 780,399.8 780,404.3 770.5,411.3" fill="#fff" shape-rendering="auto"/>
<rect x="767" y="404.8" width="12.5" height="11.3" fill="#564f4f"/>
<rect x="768.8" y="406.3" width="1.6" height="9.8" fill="#000"/>
<rect x="772.5" y="406.3" width="1.6" height="9.8" fill="#000"/>
<rect x="776.2" y="406.3" width="1.6" height="9.8" fill="#000"/>
<rect x="770.4" y="406.3" width="2.1" height="9.8" fill="#ababab"/>
<rect x="774.1" y="406.3" width="2.1" height="9.8" fill="#ababab"/>
<rect x="785" y="211" width="5" height="209.7" fill="url(#ticksv)"/>
<rect x="789.7" y="215" width="2.3" height="199.5" fill="#3a3434"/>
<rect x="783" y="211" width="2" height="211" fill="#f25353"/>
<rect x="783" y="329" width="9" height="2" fill="#f25353"/>
<rect x="595" y="242" width="35.5" height="146" fill="url(#hstr)"/>
<rect x="593" y="390.7" width="39.5" height="190.6" fill="url(#tile)"/>
<rect x="632" y="422" width="160" height="159.3" fill="url(#tile)"/>
<rect x="587" y="390.7" width="3" height="195.6" fill="#ababab"/>
<rect x="593" y="390.7" width="5" height="190.6" fill="#564f4f"/>
<rect x="593" y="577" width="199" height="4.3" fill="#564f4f"/>
<rect x="593" y="390.7" width="39" height="1.8" fill="#564f4f"/>
<rect x="598" y="574" width="194" height="3" fill="#ababab"/>
<rect x="608" y="574.5" width="14" height="1.5" fill="#fff"/>
<rect x="638" y="574.5" width="14" height="1.5" fill="#fff"/>
<rect x="668" y="574.5" width="14" height="1.5" fill="#fff"/>
<rect x="698" y="574.5" width="14" height="1.5" fill="#fff"/>
<rect x="728" y="574.5" width="14" height="1.5" fill="#fff"/>
<rect x="758" y="574.5" width="14" height="1.5" fill="#fff"/>
<rect x="587" y="583.7" width="205" height="2.6" fill="#ababab"/>
<rect x="633.7" y="581" width="25" height="1.6" fill="#000"/>
<rect x="633" y="421.7" width="91" height="120.8" fill="none" stroke="#f25353" stroke-width="2"/>
<rect x="634" y="422.7" width="89" height="118.8" fill="url(#ticksh)"/>
<rect x="638.5" y="427.5" width="78.7" height="107.5" fill="#000"/>
<rect x="640.3" y="429.3" width="75.1" height="103.9" fill="#595252"/>
<rect x="632" y="420.7" width="160" height="2" fill="#f25353"/>
<rect x="630" y="387" width="9.5" height="9.5" fill="#f25353"/>
<rect x="633.5" y="389.5" width="2.5" height="2.5" fill="#564f4f"/>
<rect x="632" y="396" width="2.5" height="26" fill="#f25353"/>
<rect x="635" y="396" width="2" height="26" fill="#f25353"/>
<rect x="725" y="422.7" width="67" height="38" fill="url(#plankv)"/>
<rect x="725" y="460.7" width="67" height="2.3" fill="#564f4f"/>
<rect x="725" y="463" width="67" height="6.5" fill="#ababab"/>
<rect x="725" y="469.5" width="67" height="42.5" fill="url(#plankv)"/>
<rect x="723" y="422" width="2" height="121" fill="#f25353"/>
<rect x="640" y="543.8" width="12.5" height="11.3" fill="#564f4f"/>
<rect x="641.8" y="545.3" width="1.6" height="9.8" fill="#000"/>
<rect x="645.5" y="545.3" width="1.6" height="9.8" fill="#000"/>
<rect x="649.2" y="545.3" width="1.6" height="9.8" fill="#000"/>
<rect x="643.4" y="545.3" width="2.1" height="9.8" fill="#ababab"/>
<rect x="647.1" y="545.3" width="2.1" height="9.8" fill="#ababab"/>
<polygon points="738,540.8 754.6,541.5 763.6,552.6 765,576 757.3,589.9 743.5,592.6 732.5,589.2 725.6,571.9 723.5,558 727,548.4" fill="#ababab" stroke="#564f4f" stroke-width="1.800" shape-rendering="auto"/>
<polygon points="740.48,542.83 754.76,543.43 762.5,552.98 763.7,573.1 757.08,585.05 745.21,587.38 735.75,584.45 729.82,569.57 728.01,557.62 731.02,549.36" fill="#fbfbfb" shape-rendering="auto"/>
<rect x="743.75" y="564.59" width="1.9" height="1.9" fill="#d4d4d4"/>
<rect x="734.2" y="574.16" width="1.9" height="1.9" fill="#d4d4d4"/>
<rect x="738.55" y="553.32" width="1.9" height="1.9" fill="#d4d4d4"/>
<rect x="742.53" y="578.55" width="1.9" height="1.9" fill="#d4d4d4"/>
<rect x="752.17" y="566.62" width="1.9" height="1.9" fill="#d4d4d4"/>
<rect x="754.93" y="575.04" width="1.9" height="1.9" fill="#d4d4d4"/>
<rect x="744.05" y="557.7" width="1.9" height="1.9" fill="#d4d4d4"/>
<rect x="744.18" y="571.36" width="1.9" height="1.9" fill="#d4d4d4"/>
<rect x="736.41" y="580.1" width="1.9" height="1.9" fill="#d4d4d4"/>
<rect x="752.16" y="572.01" width="1.9" height="1.9" fill="#d4d4d4"/>
<rect x="755.01" y="568.07" width="1.9" height="1.9" fill="#d4d4d4"/>
<rect x="748.35" y="556.85" width="1.9" height="1.9" fill="#d4d4d4"/>
<rect x="753.53" y="552.6" width="1.9" height="1.9" fill="#d4d4d4"/>
<rect x="749.1" y="557.52" width="1.9" height="1.9" fill="#d4d4d4"/>
<polygon points="786.3,519.4 799,519 804,547 804,569 782.2,567.8 775.3,559.5 771.2,547 771.8,529.1" fill="#ababab" stroke="#564f4f" stroke-width="1.800" shape-rendering="auto"/>
<polygon points="788.6,521.34 799.52,521 803.82,545.08 803.82,564 785.07,562.97 779.14,555.83 775.61,545.08 776.13,529.69" fill="#fbfbfb" shape-rendering="auto"/>
<rect x="792.74" y="544.09" width="1.9" height="1.9" fill="#d4d4d4"/>
<rect x="788.4" y="558.36" width="1.9" height="1.9" fill="#d4d4d4"/>
<rect x="784.08" y="536.58" width="1.9" height="1.9" fill="#d4d4d4"/>
<rect x="798.7" y="539.45" width="1.9" height="1.9" fill="#d4d4d4"/>
<rect x="786.73" y="531.65" width="1.9" height="1.9" fill="#d4d4d4"/>
<rect x="785.18" y="533.31" width="1.9" height="1.9" fill="#d4d4d4"/>
<rect x="782.39" y="536.52" width="1.9" height="1.9" fill="#d4d4d4"/>
<rect x="791.7" y="540.01" width="1.9" height="1.9" fill="#d4d4d4"/>
<rect x="785.04" y="543.21" width="1.9" height="1.9" fill="#d4d4d4"/>
<rect x="792.4" y="544.41" width="1.9" height="1.9" fill="#d4d4d4"/>
<rect x="797.05" y="556.02" width="1.9" height="1.9" fill="#d4d4d4"/>
<rect x="799.47" y="537.51" width="1.9" height="1.9" fill="#d4d4d4"/>
<rect x="797.89" y="540.42" width="1.9" height="1.9" fill="#d4d4d4"/>
<rect x="783.95" y="530.24" width="1.9" height="1.9" fill="#d4d4d4"/>
<path d="M727 524q-1 -5 4 -7q5 1 4 5h4q3 -1 3 -6M728 525h12" stroke="#564f4f" stroke-width="1.800" fill="none" shape-rendering="auto"/>
<rect x="732.5" y="520.5" width="2" height="3" fill="#000"/>
<rect x="741.5" y="514" width="2" height="3" fill="#000"/>
<rect x="718.25" y="537.25" width="60.5" height="60" fill="none" stroke="#f25353" stroke-width="1.9"/>
<rect x="765.15" y="513.95" width="37.9" height="60.5" fill="none" stroke="#f25353" stroke-width="1.9"/>
<rect x="724" y="512.5" width="68" height="3" fill="#f25353"/>
<rect x="593" y="590" width="42.5" height="85.5" fill="url(#hstr)"/>
<rect x="319.4" y="662.1" width="59.9" height="24" fill="none" stroke="#f25353" stroke-width="1.8"/>
<polygon points="326.5,676 338,666 344,664.5 356,665.5 365,676" fill="#c0c0c0"/>
<polygon points="336,676 342,668 352,668 358,676" fill="#eee"/>
<rect x="248" y="545" width="2.3" height="36.5" fill="#000"/>
<rect x="245.5" y="544" width="7.3" height="1.8" fill="#000"/>
<rect x="240" y="580.3" width="25" height="1.7" fill="#000"/>
<line x1="248.5" y1="581" x2="232.7" y2="676" stroke="#222" stroke-width="1.2" shape-rendering="auto"/>
<rect x="452.7" y="478" width="7.3" height="7.7" fill="#000"/>
<polygon points="454,476.5 467,481.5 454,486.5" fill="#000" shape-rendering="auto"/>
<line x1="456" y1="481.5" x2="632" y2="469.5" stroke="#222" stroke-width="1.2" shape-rendering="auto"/>
<line x1="464" y1="482" x2="632" y2="514.5" stroke="#222" stroke-width="1.2" shape-rendering="auto"/>
<polygon points="634.5,464.5 634.5,474.5 625,469.8" fill="#000" shape-rendering="auto"/>
<polygon points="634.5,508.5 634.5,519.5 624,513" fill="#000" shape-rendering="auto"/>
<line x1="599" y1="472" x2="632" y2="469.5" stroke="#000" stroke-width="2.4" shape-rendering="auto"/>
<line x1="599" y1="508.5" x2="632" y2="514.5" stroke="#000" stroke-width="2.4" shape-rendering="auto"/>
<line x1="456" y1="481.5" x2="494" y2="484" stroke="#000" stroke-width="2.2" shape-rendering="auto"/>
<rect x="685" y="544.5" width="2.3" height="35.5" fill="#000"/>
<rect x="682.5" y="543.5" width="7.5" height="1.7" fill="#000"/>
<line x1="685.5" y1="580" x2="682.5" y2="676" stroke="#222" stroke-width="1.2" shape-rendering="auto"/>
<line x1="686.5" y1="580" x2="700.5" y2="676" stroke="#222" stroke-width="1.2" shape-rendering="auto"/>
</svg><div class="abs stat" style="left:430px;top:649px">Mouse: (353.9, 297.5)</div><div class="abs stat" style="left:571px;top:649px">Active layer: World</div><div class="abs stat" style="left:701px;top:649px">Zoom: 189%</div></div>
<div id="vscroll" class="abs"><div class="abs" style="left:2px;top:315px;width:7px;height:85px;background:#4c4c4c;border-radius:3px"></div><div class="abs" style="left:2px;top:677px;width:6px;height:6px;border-radius:3px;background:#3a3a3a"></div></div>
<div id="hscroll" class="abs"><div class="abs" style="left:331px;top:1px;width:117px;height:7px;background:#4c4c4c;border-radius:3px"></div></div>

<!-- TOOLBAR -->
<div id="toolbar" class="abs"><div id="menubtn" class="abs"><svg class="abs" style="left:8px;top:8px" width="15" height="10" viewBox="0 0 15 10"><path d="M0 1h15M0 5h15M0 9h15" stroke="#222" stroke-width="1.6"/></svg><div class="t abs">MENU</div></div>
<svg class="abs" style="left:84px;top:5px" width="20" height="20" viewBox="0 0 24 24"><path fill="#6b6d65" fill-rule="evenodd" d="M17 3H5c-1.11 0-2 .9-2 2v14c0 1.1.89 2 2 2h14c1.1 0 2-.9 2-2V7l-4-4zm-5 16c-1.66 0-3-1.34-3-3s1.34-3 3-3 3 1.34 3 3-1.34 3-3 3zm3-10H5V5h10v4z"/></svg>
<div class="abs vsep" style="left:114px"></div>
<svg class="abs" style="left:123px;top:3px" width="22" height="22" viewBox="0 0 24 24"><path fill="#62645c" fill-rule="evenodd" d="M12.5 8c-2.65 0-5.05.99-6.9 2.6L2 7v9h9l-3.62-3.62c1.39-1.16 3.16-1.88 5.12-1.88 3.54 0 6.55 2.31 7.6 5.5l2.37-.78C21.08 11.03 17.15 8 12.5 8z"/></svg>
<div class="abs" style="left:150px;top:13px;width:0;height:0;border-top:4px solid #5f6159;border-left:3px solid transparent;border-right:3px solid transparent"></div>
<svg class="abs" style="left:161px;top:3px" width="22" height="22" viewBox="0 0 24 24"><path fill="#62645c" fill-rule="evenodd" d="M18.4 10.6C16.55 8.99 14.15 8 11.5 8c-4.65 0-8.58 3.030-9.96 7.22L3.9 16c1.05-3.19 4.05-5.5 7.6-5.5 1.95 0 3.73.72 5.12 1.880L13 16h9V7l-3.6 3.6z"/></svg>
<div class="abs" style="left:188px;top:13px;width:0;height:0;border-top:4px solid #5f6159;border-left:3px solid transparent;border-right:3px solid transparent"></div>
<div class="abs vsep" style="left:202px"></div>
<svg class="abs" style="left:211.2px;top:4.7px" width="20" height="20" viewBox="0 0 24 24"><path fill="#c8c8c8" fill-rule="evenodd" d="M8 5v14l11-7z"/></svg>
<div class="abs" style="left:237px;top:13px;width:0;height:0;border-top:4px solid #151515;border-left:3px solid transparent;border-right:3px solid transparent"></div>
<div class="abs tab" style="left:258px;width:76px;background:#7f7f7f;color:#4a4a4a;padding-left:8px">Start page</div>
<div class="abs tab" style="left:336px;width:96px;background:#fdf0c8;color:#1e1e1e;padding-left:9px">MainLevel<svg class="abs" style="left:78px;top:8px" width="10" height="10" viewBox="0 0 10 10"><path d="M1 1L9 9M9 1L1 9" stroke="#333" stroke-width="1.3" fill="none"/></svg></div>
<div class="abs tab" style="left:434px;width:77px;background:#8c7b7b;color:#4a3e3e;padding-left:9px">MainCode</div>
<div class="abs tab" style="left:513px;width:118px;background:#878c7c;color:#4a5042;padding-left:8px">ObjectRepository</div>
<div class="abs" style="left:747px;top:9px;color:#a4a4a4;font-size:13px">Tom</div>
<svg class="abs" style="left:776px;top:5.5px" width="20" height="20" viewBox="0 0 24 24"><defs><clipPath id="av786"><circle cx="12" cy="12" r="12"/></clipPath></defs><g clip-path="url(#av786)"><rect width="24" height="24" fill="#ffff00"/><path d="M5 0h14l-1.500 9-1.500 6 1 9H6.500l.500-9L4.500 8z" fill="#2fdcc6"/><path d="M0 0h6l-1 5z M24 0h-6l1 5z" fill="#2fdcc6"/><circle cx="9.300" cy="7.800" r="2" fill="none" stroke="#4d8f9c" stroke-width=".9"/><circle cx="15.300" cy="7.800" r=".9" fill="#4fb0a8"/><path d="M8.500 12c1.500-1 6-1 7.500 0-.500 1.800-2 2.400-3.800 2.400S9 13.800 8.500 12z" fill="#3d8a98"/><path d="M8.300 11.600q3.900-1.600 7.900 0" stroke="#2b5f70" stroke-width="1" fill="none"/></g></svg></div>

<!-- MENUS -->
<div id="menu1" class="abs"><svg class="abs" style="left:8px;top:9px" width="24" height="24" viewBox="0 0 24 24"><path fill="#b4b4b4" fill-rule="evenodd" d="M21 6H3c-1.1 0-2 .9-2 2v8c0 1.1.9 2 2 2h18c1.1 0 2-.9 2-2V8c0-1.1-.9-2-2-2zm-10 7H8v3H6v-3H3v-2h3V8h2v3h3v2zm4.5 2c-.83 0-1.5-.67-1.5-1.5s.67-1.5 1.5-1.5 1.5.67 1.5 1.5-.67 1.5-1.5 1.5zm4-3c-.83 0-1.5-.67-1.5-1.5S18.67 9 19.5 9s1.500.67 1.5 1.5-.67 1.5-1.5 1.5z"/></svg>
<div class="abs mi" style="left:56px;top:15px">Project</div>
<div class="abs marr" style="left:196px;top:17px"></div>
<svg class="abs" style="left:8px;top:44px" width="24" height="24" viewBox="0 0 24 24"><path fill="#b4b4b4" d="M11 2h2v5h5.100l2.700 2.500-2.700 2.500H13v8h1.500l.700 2H8.800l.700-2H11v-8H3.700l2-2.500-2-2.500H11z"/></svg>
<div class="abs mi" style="left:56px;top:49px">Guided tours</div>
<div class="abs marr" style="left:196px;top:51px"></div>
<svg class="abs" style="left:8px;top:78px" width="24" height="24" viewBox="0 0 24 24"><path fill="#b4b4b4" fill-rule="evenodd" d="M12 4.5C7 4.5 2.73 7.61 1 12c1.73 4.39 6 7.5 11 7.5s9.27-3.11 11-7.5c-1.73-4.39-6-7.5-11-7.5zM12 17c-2.76 0-5-2.24-5-5s2.24-5 5-5 5 2.24 5 5-2.24 5-5 5zm0-8c-1.66 0-3 1.34-3 3s1.34 3 3 3 3-1.34 3-3-1.34-3-3-3z"/></svg>
<div class="abs mi" style="left:56px;top:83px">View</div>
<div class="abs marr" style="left:196px;top:85px"></div>
<div class="abs mi" style="left:56px;top:118px">Account</div>
<div class="abs marr" style="left:196px;top:120px"></div>
<svg class="abs" style="left:8px;top:157px" width="24" height="24" viewBox="0 0 24 24"><path fill="#b4b4b4" fill-rule="evenodd" d="M19 9h-4V3H9v6H5l7 7 7-7zM5 18v2h14v-2H5z"/></svg>
<div class="abs mi" style="left:56px;top:162px">Install as app</div>
<svg class="abs" style="left:8px;top:202px" width="24" height="24" viewBox="0 0 24 24"><path fill="#b4b4b4" fill-rule="evenodd" d="M20.5 11H19V7c0-1.1-.9-2-2-2h-4V3.5C13 2.12 11.88 1 10.5 1S8 2.12 8 3.5V5H4c-1.1 0-1.99.9-1.99 2v3.8H3.5c1.49 0 2.7 1.21 2.7 2.7s-1.21 2.7-2.7 2.7H2V20c0 1.1.9 2 2 2h3.8v-1.5c0-1.49 1.21-2.7 2.7-2.7 1.49 0 2.7 1.21 2.7 2.7V22H17c1.1 0 2-.9 2-2v-4h1.5c1.38 0 2.5-1.12 2.5-2.5S21.88 11 20.5 11z"/></svg>
<div class="abs mi" style="left:56px;top:207px">Get addons</div>
<svg class="abs" style="left:8px;top:236px" width="24" height="24" viewBox="0 0 24 24"><path fill="#b4b4b4" d="M3.400 7.200C4.200 3.800 6.500 1.700 9.200 1.800L16.800 4.600C14.500 6.300 13.400 8.500 13.100 11.300Z"/><path fill="#b4b4b4" d="M14.500 11.600C14.800 8.300 16.200 6.300 18.600 5.300C20.500 5.800 21.300 7.500 21.200 9.300Z"/><path fill="#b4b4b4" d="M2.900 10L12.700 14.400V21.200L2.900 16.300Z"/><path fill="#b4b4b4" d="M14.200 14.400L21.200 11V16.700L14.200 21.200Z"/><path fill="#202020" d="M8 6.600l1.600-1.200v3.200l-1.600-.700z"/></svg>
<div class="abs mi" style="left:56px;top:241px">Asset Store</div>
<svg class="abs" style="left:8px;top:270px" width="24" height="24" viewBox="0 0 24 24"><path fill="#b4b4b4" fill-rule="evenodd" d="M19.14 12.94c.04-.3.06-.61.06-.94 0-.32-.02-.64-.07-.94l2.03-1.58c.18-.14.23-.41.12-.61l-1.92-3.32c-.12-.22-.37-.29-.59-.22l-2.39.96c-.5-.38-1.03-.7-1.62-.94l-.36-2.54c-.04-.24-.24-.41-.48-.41h-3.84c-.24 0-.43.17-.47.41l-.36 2.54c-.59.24-1.13.57-1.62.94l-2.39-.96c-.22-.08-.47 0-.59.22L2.74 8.87c-.12.21-.08.47.12.61l2.03 1.58c-.05.3-.09.63-.09.94s.02.64.07.94l-2.03 1.58c-.18.14-.23.41-.12.61l1.92 3.32c.12.22.37.29.59.22l2.39-.96c.5.38 1.03.7 1.62.94l.36 2.54c.05.24.24.41.48.41h3.84c.24 0 .44-.17.47-.41l.36-2.54c.59-.24 1.13-.56 1.62-.94l2.39.96c.22.08.47 0 .59-.22l1.92-3.32c.12-.22.07-.47-.12-.61l-2.01-1.58zM12 15.6c-1.98 0-3.6-1.62-3.6-3.6s1.62-3.6 3.6-3.6 3.6 1.62 3.6 3.6-1.62 3.6-3.6 3.6z"/></svg>
<div class="abs mi" style="left:56px;top:275px">Settings</div>
<svg class="abs" style="left:8px;top:305px" width="24" height="24" viewBox="0 0 24 24"><path fill="#b4b4b4" fill-rule="evenodd" d="M12 2C6.48 2 2 6.48 2 12s4.48 10 10 10 10-4.48 10-10S17.52 2 12 2zm1 17h-2v-2h2v2zm2.07-7.75l-.9.92C13.45 12.9 13 13.5 13 15h-2v-.5c0-1.1.45-2.1 1.17-2.83l1.24-1.26c.37-.36.59-.86.59-1.41 0-1.1-.9-2-2-2s-2 .9-2 2H8c0-2.21 1.79-4 4-4s4 1.79 4 4c0 .88-.36 1.68-.93 2.25z"/></svg>
<div class="abs mi" style="left:56px;top:310px">Help</div>
<svg class="abs" style="left:8px;top:339px" width="24" height="24" viewBox="0 0 24 24"><path fill="#b4b4b4" fill-rule="evenodd" d="M12 2C6.48 2 2 6.48 2 12s4.48 10 10 10 10-4.48 10-10S17.52 2 12 2zm1 15h-2v-6h2v6zm0-8h-2V7h2v2z"/></svg>
<div class="abs mi" style="left:56px;top:344px">About</div>
<svg class="abs" style="left:8px;top:112px" width="24" height="24" viewBox="0 0 24 24"><defs><clipPath id="avm"><circle cx="12" cy="12" r="12"/></clipPath></defs><g clip-path="url(#avm)"><rect width="24" height="24" fill="#ffff00"/><path d="M5 0h14l-1.500 9-1.500 6 1 9H6.500l.500-9L4.500 8z" fill="#2fdcc6"/><path d="M0 0h6l-1 5z M24 0h-6l1 5z" fill="#2fdcc6"/><circle cx="9.300" cy="7.800" r="2" fill="none" stroke="#4d8f9c" stroke-width=".9"/><circle cx="15.300" cy="7.800" r=".9" fill="#4fb0a8"/><path d="M8.500 12c1.500-1 6-1 7.500 0-.500 1.800-2 2.400-3.800 2.400S9 13.800 8.500 12z" fill="#3d8a98"/><path d="M8.300 11.600q3.900-1.600 7.900 0" stroke="#2b5f70" stroke-width="1" fill="none"/></g></svg></div>
<div id="menu2" class="abs"><div class="abs" style="left:0;top:117px;width:208px;height:35px;background:#33312c"></div>
<svg class="abs" style="left:6px;top:10px" width="24" height="24" viewBox="0 0 24 24"><path fill="#b4b4b4" fill-rule="evenodd" d="M17 3H5c-1.11 0-2 .9-2 2v14c0 1.1.89 2 2 2h14c1.1 0 2-.9 2-2V7l-4-4zm-5 16c-1.66 0-3-1.34-3-3s1.34-3 3-3 3 1.34 3 3-1.34 3-3 3zm3-10H5V5h10v4z"/></svg>
<div class="abs mi" style="top:15px;color:#d6d6d6">Save</div>
<svg class="abs" style="left:6px;top:44px" width="24" height="24" viewBox="0 0 24 24"><path fill="#b4b4b4" fill-rule="evenodd" d="M17 3H5c-1.11 0-2 .9-2 2v14c0 1.1.89 2 2 2h14c1.1 0 2-.9 2-2V7l-4-4zm-5 16c-1.66 0-3-1.34-3-3s1.34-3 3-3 3 1.34 3 3-1.34 3-3 3zm3-10H5V5h10v4z"/></svg>
<div class="abs mi" style="top:49px;color:#d6d6d6">Save as</div>
<div class="abs marr" style="left:190px;top:51px"></div>
<svg class="abs" style="left:6px;top:88px" width="24" height="24" viewBox="0 0 24 24"><path fill="#b4b4b4" fill-rule="evenodd" d="M8 5v14l11-7z"/></svg>
<div class="abs mi" style="top:93px;color:#d6d6d6">Preview</div>
<svg class="abs" style="left:6px;top:123px" width="24" height="24" viewBox="0 0 24 24"><path fill="#b4b4b4" d="M4.900 5.600L13.600 11.400L4.900 17.200Z"/><path d="M15.200 8Q18.700 11.400 15.200 15" fill="none" stroke="#b4b4b4" stroke-width="1.700"/><path d="M17.700 4.400Q24.300 11.400 17.700 18.700" fill="none" stroke="#b4b4b4" stroke-width="1.700"/></svg>
<div class="abs mi" style="top:128px;color:#f4f4f4">Remote preview</div>
<svg class="abs" style="left:6px;top:157px" width="24" height="24" viewBox="0 0 24 24"><ellipse cx="12.100" cy="13" rx="5.800" ry="8" fill="#b4b4b4"/><path d="M5.800 2.600L9.800 6.600M18.400 2.600L14.400 6.600M2.800 9.300H7M2.800 13.500H6.500M2.800 17.700H7M17.200 9.300H21.400M17.700 13.500H21.400M17.200 17.700H21.400" stroke="#b4b4b4" stroke-width="1.700" fill="none"/><path d="M10 8.500L15.800 13L10 17.500Z" fill="#202020"/></svg>
<div class="abs mi" style="top:162px;color:#d6d6d6">Debug</div>
<svg class="abs" style="left:6px;top:192px" width="24" height="24" viewBox="0 0 24 24"><path d="M5 11V2.200H14L19.800 8V20.500H11" fill="none" stroke="#b4b4b4" stroke-width="1.800"/><path d="M13.500 2.500V8.500H19.500" fill="none" stroke="#b4b4b4" stroke-width="1.800"/><path fill="#b4b4b4" d="M3.700 11.500h3.400v5H10L5.400 21.800L.800 16.500H3.700Z"/></svg>
<div class="abs mi" style="top:197px;color:#d6d6d6">Export</div>
<svg class="abs" style="left:6px;top:236px" width="24" height="24" viewBox="0 0 24 24"><path fill="#b4b4b4" fill-rule="evenodd" d="M19 6.41L17.59 5 12 10.59 6.41 5 5 6.41 10.59 12 5 17.59 6.41 19 12 13.41 17.59 19 19 17.59 13.41 12z"/></svg>
<div class="abs mi" style="top:241px;color:#d6d6d6">Close project</div>
<svg class="abs" style="left:6px;top:280px" width="24" height="24" viewBox="0 0 24 24"><path fill="#b4b4b4" fill-rule="evenodd" d="M14 2H6c-1.1 0-1.99.9-1.99 2L4 20c0 1.1.89 2 1.99 2H18c1.1 0 2-.9 2-2V8l-6-6zM6 20V4h7v5h5v11H6z"/></svg>
<div class="abs mi" style="top:285px;color:#d6d6d6">New</div>
<svg class="abs" style="left:6px;top:315px" width="24" height="24" viewBox="0 0 24 24"><path fill="#b4b4b4" fill-rule="evenodd" d="M9.17 6l2 2H20v10H4V6h5.17M10 4H4c-1.1 0-1.99.9-1.99 2L2 18c0 1.1.9 2 2 2h16c1.1 0 2-.9 2-2V8c0-1.1-.9-2-2-2h-8l-2-2z"/></svg>
<div class="abs mi" style="top:320px;color:#d6d6d6">Open</div>
<div class="abs marr" style="left:190px;top:322px"></div>
<svg class="abs" style="left:6px;top:349px" width="24" height="24" viewBox="0 0 24 24"><path fill="#b4b4b4" fill-rule="evenodd" d="M9.17 6l2 2H20v10H4V6h5.17M10 4H4c-1.1 0-1.99.9-1.99 2L2 18c0 1.1.9 2 2 2h16c1.1 0 2-.9 2-2V8c0-1.1-.9-2-2-2h-8l-2-2z"/></svg>
<div class="abs mi" style="top:354px;color:#d6d6d6">Open recent</div>
<div class="abs marr" style="left:190px;top:356px"></div></div>
</body>
</html>
